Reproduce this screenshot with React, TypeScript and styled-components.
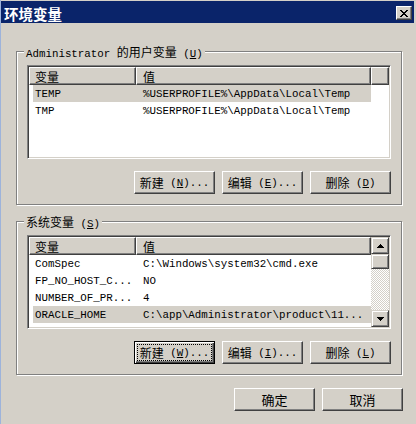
import React from "react";
import styled, { createGlobalStyle, css } from "styled-components";

const GlobalStyle = createGlobalStyle`
  html, body { margin: 0; padding: 0; background: #D4D0C8; }
  body {
    font-family: "Liberation Mono", "Noto Sans CJK SC", monospace;
    font-size: 10.8px;
    color: #000;
  }
`;

const Window = styled.div`
  width: 416px;
  height: 424px;
  box-sizing: border-box;
  border-left: 1px solid #9DB3DB;
  display: flex;
  flex-direction: column;
  overflow: hidden;
`;

const TitleBar = styled.div`
  margin: 1px 2px 0 0;
  height: 22px;
  background: #0A246A;
  display: flex;
  align-items: center;
  padding-left: 3px;
  flex: none;
`;

const TitleText = styled.span`
  font-family: "Noto Sans CJK SC", sans-serif;
  font-weight: 700;
  font-size: 14.5px;
  line-height: 14px;
  color: #fff;
  padding-top: 3px;
`;

const CloseButton = styled.div`
  margin-left: auto;
  margin-right: 2px;
  margin-top: 2px;
  width: 16px;
  height: 14px;
  box-sizing: border-box;
  background: #D4D0C8;
  border: 1px solid;
  border-color: #fff #404040 #404040 #fff;
  box-shadow: inset -1px -1px #808080;
  display: flex;
  align-items: center;
  justify-content: center;
`;

const Content = styled.div`
  padding: 0 13px 0 15px;
  display: flex;
  flex-direction: column;
`;

const Group = styled.section<{ $top: number }>`
  position: relative;
  width: 386px;
  box-sizing: border-box;
  margin-top: ${(p) => p.$top}px;
  border: 1px solid #808080;
  box-shadow: inset 1px 1px #fff, 1px 1px #fff;
  padding: 13px 10px 10px 10px;
  display: flex;
  flex-direction: column;
  gap: 12px;
`;

const Caption = styled.div`
  position: absolute;
  top: -8px;
  left: 7px;
  padding: 0 2px;
  background: #D4D0C8;
  line-height: 15px;
  white-space: nowrap;
`;

const Zh = styled.span<{ $size?: number }>`
  font-family: "Noto Sans CJK SC", sans-serif;
  font-size: ${(p) => p.$size ?? 12}px;
`;

const Key = styled.span`
  text-decoration: underline;
`;

const List = styled.div`
  height: 94px;
  width: 364px;
  box-sizing: border-box;
  border: 1px solid;
  border-color: #808080 #fff #fff #808080;
  box-shadow: inset 1px 1px #404040, inset -1px -1px #D4D0C8;
  padding: 1px;
  background: #fff;
  display: flex;
  overflow: hidden;
`;

const ListMain = styled.div`
  flex: 1;
  min-width: 0;
  display: flex;
  flex-direction: column;
  overflow: hidden;
`;

const Header = styled.div`
  display: flex;
  height: 18px;
  flex: none;
`;

const HeaderCell = styled.div<{ $w?: number; $pad?: number }>`
  ${(p) => (p.$w ? `width: ${p.$w}px; flex: none;` : "flex: 1;")}
  box-sizing: border-box;
  background: #D4D0C8;
  border: 1px solid;
  border-color: #fff #404040 #404040 #fff;
  box-shadow: inset -1px -1px #808080;
  padding-left: ${(p) => p.$pad ?? 0}px;
  display: flex;
  align-items: center;
  white-space: nowrap;
`;

const Row = styled.div<{ $selected?: boolean }>`
  display: flex;
  align-items: center;
  height: 17px;
  flex: none;
  margin-left: 4px;
  width: 338px;
  white-space: nowrap;
  background: ${(p) => (p.$selected ? "#D4D0C8" : "transparent")};
`;

const Cell = styled.div<{ $w: number; $pad: number }>`
  width: ${(p) => p.$w}px;
  flex: none;
  box-sizing: border-box;
  padding-left: ${(p) => p.$pad}px;
  overflow: hidden;
`;

const ScrollBar = styled.div`
  width: 18px;
  flex: none;
  display: flex;
  flex-direction: column;
`;

const ScrollButton = styled.div<{ $h?: number }>`
  height: ${(p) => p.$h ?? 17}px;
  flex: none;
  box-sizing: border-box;
  background: #D4D0C8;
  border: 1px solid;
  border-color: #D4D0C8 #404040 #404040 #D4D0C8;
  box-shadow: inset 1px 1px #fff, inset -1px -1px #808080;
  display: flex;
  align-items: center;
  justify-content: center;
`;

const Track = styled.div`
  flex: 1;
  background: repeating-conic-gradient(#fff 0 25%, #D4D0C8 0 50%) 0 0 / 2px 2px;
`;

const ButtonRow = styled.div<{ $top?: number }>`
  display: flex;
  justify-content: flex-end;
  gap: 7px;
  margin-top: ${(p) => p.$top ?? 0}px;
`;

const Button = styled.button<{ $focused?: boolean }>`
  width: 81px;
  height: 23px;
  box-sizing: border-box;
  margin: 0;
  padding: 0;
  background: #D4D0C8;
  font: inherit;
  color: #000;
  border: 1px solid;
  border-color: #fff #404040 #404040 #fff;
  box-shadow: inset -1px -1px #808080;
  display: flex;
  align-items: center;
  justify-content: center;
  white-space: nowrap;
  ${(p) =>
    p.$focused &&
    css`
      border-color: #000;
      box-shadow: inset 1px 1px #fff, inset -1px -1px #404040, inset -2px -2px #808080;
      outline: 1px dotted #000;
      outline-offset: -4px;
    `}
`;

const CloseGlyph = () => (
  <svg width="8" height="7" viewBox="0 0 8 7" shapeRendering="crispEdges">
    <path
      fill="#000"
      d="M0 0h2v1H0zM6 0h2v1H6zM1 1h2v1H1zM5 1h2v1H5zM2 2h4v1H2zM3 3h2v1H3zM2 4h4v1H2zM1 5h2v1H1zM5 5h2v1H5zM0 6h2v1H0zM6 6h2v1H6z"
    />
  </svg>
);

const Arrow = ({ down }: { down?: boolean }) => (
  <svg width="7" height="4" viewBox="0 0 7 4" shapeRendering="crispEdges">
    <path
      fill="#000"
      d={
        down
          ? "M0 0h7v1H0zM1 1h5v1H1zM2 2h3v1H2zM3 3h1v1H3z"
          : "M3 0h1v1H3zM2 1h3v1H2zM1 2h5v1H1zM0 3h7v1H0z"
      }
    />
  </svg>
);

type Item = { name: string; value: string; selected?: boolean };

const userVars: Item[] = [
  { name: "TEMP", value: "%USERPROFILE%\\AppData\\Local\\Temp", selected: true },
  { name: "TMP", value: "%USERPROFILE%\\AppData\\Local\\Temp" },
];

const sysVars: Item[] = [
  { name: "ComSpec", value: "C:\\Windows\\system32\\cmd.exe" },
  { name: "FP_NO_HOST_C...", value: "NO" },
  { name: "NUMBER_OF_PR...", value: "4" },
  { name: "ORACLE_HOME", value: "C:\\app\\Administrator\\product\\11...", selected: true },
];

const VarList = ({ items, scroll }: { items: Item[]; scroll?: boolean }) => (
  <List>
    <ListMain>
      <Header>
        <HeaderCell $w={107} $pad={5}>
          <Zh>变量</Zh>
        </HeaderCell>
        <HeaderCell $w={235} $pad={6}>
          <Zh>值</Zh>
        </HeaderCell>
        {!scroll && <HeaderCell />}
      </Header>
      {items.map((it) => (
        <Row key={it.name} $selected={it.selected}>
          <Cell $w={103} $pad={2}>{it.name}</Cell>
          <Cell $w={235} $pad={7}>{it.value}</Cell>
        </Row>
      ))}
    </ListMain>
    {scroll && (
      <ScrollBar>
        <ScrollButton>
          <Arrow />
        </ScrollButton>
        <ScrollButton $h={15} />
        <Track />
        <ScrollButton>
          <Arrow down />
        </ScrollButton>
      </ScrollBar>
    )}
  </List>
);

export default function App() {
  return (
    <>
      <GlobalStyle />
      <Window>
        <TitleBar>
          <TitleText>环境变量</TitleText>
          <CloseButton>
            <CloseGlyph />
          </CloseButton>
        </TitleBar>
        <Content>
          <Group $top={28}>
            <Caption>
              Administrator <Zh>的用户变量</Zh> (<Key>U</Key>)
            </Caption>
            <VarList items={userVars} />
            <ButtonRow>
              <Button>
                <Zh>新建</Zh>&nbsp;(<Key>N</Key>)...
              </Button>
              <Button>
                <Zh>编辑</Zh>&nbsp;(<Key>E</Key>)...
              </Button>
              <Button>
                <Zh>删除</Zh>&nbsp;(<Key>D</Key>)
              </Button>
            </ButtonRow>
          </Group>
          <Group $top={16}>
            <Caption>
              <Zh>系统变量</Zh> (<Key>S</Key>)
            </Caption>
            <VarList items={sysVars} scroll />
            <ButtonRow>
              <Button $focused>
                <Zh>新建</Zh>&nbsp;(<Key>W</Key>)...
              </Button>
              <Button>
                <Zh>编辑</Zh>&nbsp;(<Key>I</Key>)...
              </Button>
              <Button>
                <Zh>删除</Zh>&nbsp;(<Key>L</Key>)
              </Button>
            </ButtonRow>
          </Group>
          <ButtonRow $top={13}>
            <Button>
              <Zh $size={13}>确定</Zh>
            </Button>
            <Button>
              <Zh $size={13}>取消</Zh>
            </Button>
          </ButtonRow>
        </Content>
      </Window>
    </>
  );
}
